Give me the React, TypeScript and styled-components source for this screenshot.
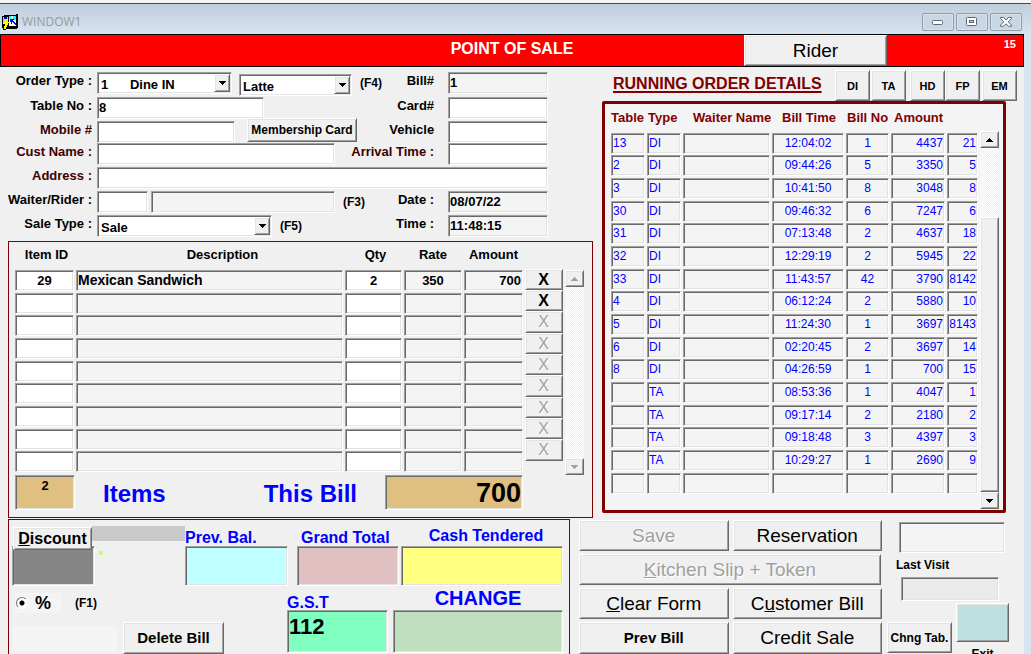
import React from 'react';
import styled, { createGlobalStyle, css } from 'styled-components';

const GlobalStyle = createGlobalStyle`
  *, *::before, *::after { box-sizing: border-box; }
  html, body, #root { height: 100%; margin: 0; }
  body {
    overflow: hidden;
    background: #f0f0f0;
    color: #000;
    font: bold 13px/16px "Liberation Sans", Arial, sans-serif;
  }
  button, input, select { font: inherit; color: inherit; border-radius: 0; margin: 0; }
`;

const sunken = css`
  border: 1px solid;
  border-color: #a0a0a0 #fff #fff #a0a0a0;
  box-shadow: inset 1px 1px #696969, inset -1px -1px #e3e3e3;
`;

const raised = css`
  border: 1px solid;
  border-color: #fff #696969 #696969 #fff;
  box-shadow: inset 1px 1px #e3e3e3, inset -1px -1px #a0a0a0;
`;

/* ---------- window frame ---------- */

const Window = styled.div`
  height: 100vh;
  overflow: hidden;
  display: flex;
  flex-direction: column;
  background: #d7e4f2;
`;

const TitleBar = styled.header`
  flex: none;
  height: 34px;
  display: flex;
  align-items: center;
  gap: 4px;
  padding: 2px 9px 0 2px;
  border-top: 3px solid #f4f4f4;
  box-shadow: inset 0 1px #4a4a4a;
  background: linear-gradient(#bfccda, #d7e4f2);
`;

const WindowTitle = styled.span`
  flex: 1;
  padding-top: 5px;
  color: #999;
  font: 12px/16px "Open Sans", sans-serif;
`;

const AppIcon = styled.svg`
  flex: none;
  margin-top: 5px;
`;

const CaptionButtons = styled.div`
  display: flex;
  gap: 2px;
  padding-top: 5px;
`;

const CaptionButton = styled.button`
  width: 32px;
  height: 18px;
  padding: 0;
  display: grid;
  place-items: center;
  border: 1px solid #919dad;
  border-radius: 2px;
  background: #c9d6e4;
  box-shadow: inset 0 0 0 1px #d7e2ed;
`;

const Client = styled.main`
  flex: 1;
  min-height: 0;
  margin-right: 7px;
  display: flex;
  flex-direction: column;
  background: #f0f0f0;
`;

const Banner = styled.div`
  flex: none;
  height: 33px;
  display: grid;
  grid-template-columns: minmax(0, 1fr) 143px 136px;
  border: 1px solid #000;
  background: #f00;
  color: #fff;
`;

const BannerTitle = styled.h1`
  grid-area: 1 / 1 / 2 / -1;
  margin: 0;
  padding-top: 5px;
  font-size: 16px;
  line-height: 18px;
  text-align: center;
`;

const BannerCount = styled.span`
  grid-area: 1 / 3;
  padding: 1px 7px 0 0;
  font-size: 11px;
  text-align: right;
`;

/* ---------- shared controls ---------- */

const Button = styled.button<{ $size?: number; $bold?: boolean }>`
  ${raised}
  padding: 0;
  background: #f0f0f0;
  color: #000;
  font-size: ${(p) => p.$size ?? 12}px;
  font-weight: ${(p) => (p.$bold ? 'bold' : 'normal')};
  line-height: 20px;
  white-space: nowrap;
  &:disabled {
    color: #a0a0a0;
    text-shadow: 1px 1px #fff;
  }
`;

const RiderButton = styled(Button)`
  grid-area: 1 / 2;
`;

const Field = styled.input<{ $w?: number }>`
  ${sunken}
  ${(p) => (p.$w ? `flex: 0 1 ${p.$w}px; width: ${p.$w}px;` : 'width: 100%;')}
  min-width: 0;
  height: 22px;
  padding: 0 1px 2px;
  background: #fff;
  outline: none;
  &:read-only { background: #f4f4f4; }
`;

const SelectBox = styled.span<{ $w: number; $drop?: boolean }>`
  ${sunken}
  position: relative;
  flex: 0 1 ${(p) => p.$w}px;
  height: 22px;
  margin-top: ${(p) => (p.$drop ? 2 : 0)}px;
  background: #fff;
  select {
    width: 100%;
    height: 20px;
    padding: 3px 18px 0 3px;
    border: 0;
    outline: none;
    background: none;
    appearance: none;
  }
`;

const SelectArrow = styled.span`
  ${raised}
  position: absolute;
  top: 1px;
  right: 1px;
  width: 16px;
  height: 18px;
  display: grid;
  place-items: center;
  background: #f0f0f0;
  pointer-events: none;
`;

const Arrow = ({ up, color = '#000' }: { up?: boolean; color?: string }) => (
  <svg width="7" height="4" viewBox="0 0 7 4" shapeRendering="crispEdges" aria-hidden="true">
    <path d={up ? 'M3 0h1v1h1v1h1v1h1v1H0V3h1V2h1V1h1z' : 'M0 0h7v1H6v1H5v1H4v1H3V3H2V2H1V1H0z'} fill={color} />
  </svg>
);

const Select = ({ id, label, w, value, drop }: { id: string; label?: string; w: number; value: string; drop?: boolean }) => (
  <SelectBox $w={w} $drop={drop}>
    <select id={id} aria-label={label} defaultValue={value}>
      <option value={value}>{value}</option>
    </select>
    <SelectArrow><Arrow /></SelectArrow>
  </SelectBox>
);

const ScrollBar = styled.div<{ $top: number; $end: number }>`
  flex: none;
  width: 19px;
  margin: ${(p) => p.$top}px 0 ${(p) => p.$end}px;
  display: flex;
  flex-direction: column;
  background: repeating-conic-gradient(#fff 0 25%, #f0f0f0 0 50%) 0 0 / 2px 2px;
`;

const ScrollButton = styled(Button)`
  flex: none;
  height: 17px;
  display: grid;
  place-items: center;
`;

const ScrollSpace = styled.div`
  flex: 1;
`;

const ScrollThumb = styled.div`
  ${raised}
  flex: none;
  height: 275px;
  background: #f0f0f0;
`;

/* ---------- page areas ---------- */

const Upper = styled.div`
  flex: none;
  display: grid;
  grid-template-columns: minmax(0, 585fr) minmax(0, 422fr);
  column-gap: 9px;
  padding-left: 8px;
`;

const Lower = styled.div`
  flex: 1;
  min-height: 136px;
  display: grid;
  grid-template-columns: minmax(0, 562fr) minmax(0, 445fr);
  column-gap: 9px;
  padding: 1px 0 0 8px;
`;

/* ---------- order form ---------- */

const Form = styled.form`
  margin-left: -8px;
  padding: 5px 45px 4px 0;
  display: grid;
  grid-template-columns: 92px minmax(0, 350fr) minmax(0, 101fr);
  grid-template-rows: 25px 24px 22px 24px 24px 24px 22px;
  column-gap: 5px;
`;

const Label = styled.label<{ $dark?: boolean }>`
  height: 17px;
  padding-top: 1px;
  color: ${(p) => (p.$dark ? '#400000' : '#000')};
  text-align: right;
  white-space: nowrap;
`;

const Middle = styled.div`
  display: flex;
  align-items: flex-start;
  margin-right: 1px;
  ${Label} { margin-left: auto; padding-right: 8px; }
`;

const Wide = styled.div`
  grid-column: 2 / -1;
`;

const Hint = styled.span`
  padding: 3px 0 0 8px;
  font-size: 12px;
`;

const MemberButton = styled(Button)`
  flex: 0 0 110px;
  height: 24px;
  margin: -3px 0 0 12px;
`;

const Gap = styled.span<{ $w: number }>`
  flex: 0 1 ${(p) => p.$w}px;
`;

/* ---------- bill items ---------- */

const ItemsPanel = styled.section`
  height: 277px;
  border: 1px solid #800000;
  padding-left: 6px;
`;

const ItemsBody = styled.div`
  display: flex;
  height: 233px;
`;

const DataTable = styled.table`
  flex: 1;
  width: 0;
  table-layout: fixed;
  border-collapse: collapse;
  align-self: flex-start;
  th, td { padding: 0 2px 0 0; vertical-align: top; white-space: nowrap; }
`;

const ItemsTable = styled(DataTable)`
  thead tr { height: 28px; }
  tbody tr { height: 23px; }
  tbody tr:nth-child(3n + 2) { height: 22px; }
  th { padding-top: 5px; text-align: center; }
  th:nth-child(odd) { padding-left: 4px; }
  th:nth-child(2) { padding-left: 26px; }
  th:last-child { padding-left: 0; }
`;

const Cell = styled.div<{ $align?: string; $size?: number }>`
  ${sunken}
  height: 21px;
  padding: 0 1px;
  overflow: hidden;
  background: #f4f4f4;
  font-size: ${(p) => (p.$size ? `${p.$size}px` : 'inherit')};
  line-height: 19px;
  text-align: ${(p) => p.$align ?? 'left'};
`;

const CellInput = styled.input`
  ${sunken}
  display: block;
  width: 100%;
  height: 21px;
  padding: 0 2px;
  background: #fff;
  text-align: center;
  outline: none;
`;

const RemoveColumn = styled.div`
  flex: 0 0 38px;
  padding-top: 27px;
  display: grid;
  grid-template-rows: 21px 21px 22px 21px 21px 22px 21px 21px 22px;
  margin-right: 2px;
  button { line-height: 16px; padding-right: 1px; }
`;

const Totals = styled.div`
  display: flex;
  color: #00f;
  font-size: 24px;
  line-height: 38px;
`;

const TotalBox = styled.output<{ $w: number; $big?: boolean }>`
  ${sunken}
  flex: 0 0 ${(p) => p.$w}px;
  height: 35px;
  padding: 1px;
  background: #dfc080;
  color: #000;
  font-size: ${(p) => (p.$big ? 27 : 13)}px;
  line-height: ${(p) => (p.$big ? 32 : 18)}px;
  text-align: ${(p) => (p.$big ? 'right' : 'center')};
`;

const ItemsCaption = styled.span`
  flex: 1;
  padding-left: 28px;
`;

const BillCaption = styled.span`
  padding-right: 28px;
`;

/* ---------- running orders ---------- */

const Running = styled.section`
  display: flex;
  flex-direction: column;
`;

const RunningHead = styled.div`
  height: 34px;
  display: flex;
  align-items: flex-end;
  padding-left: 11px;
  padding-right: 7px;
  color: #800000;
  h2 {
    flex: 1;
    margin: 0 0 8px;
    font-size: 16px;
    line-height: 18px;
    text-decoration: underline;
    text-decoration-thickness: 2px;
    text-underline-offset: 2px;
    text-decoration-skip-ink: none;
    white-space: nowrap;
  }
`;

const FilterButton = styled(Button)<{ $gap?: number }>`
  flex: 0 0 35px;
  height: 31px;
  margin-left: ${(p) => p.$gap ?? 0}px;
`;

const RunningPanel = styled.div`
  display: flex;
  height: 412px;
  margin-right: 18px;
  padding-left: 6px;
  border: 3px solid #800000;
  border-radius: 2px;
  background: #f4f4f4;
`;

const RunningTable = styled(DataTable)`
  color: #00f;
  font-weight: normal;
  font-size: 12px;
  thead tr { height: 29px; }
  tbody tr { height: 23px; }
  tbody tr:nth-child(3n + 1) { height: 22px; }
  th {
    padding-top: 6px;
    color: #800000;
    font-size: 13px;
    text-align: left;
  }
  th:nth-child(3) { padding-left: 10px; }
  th:nth-child(4) { padding-left: 10px; }
  th:nth-child(5), th:nth-child(2) { padding-left: 1px; }
  th:nth-child(6) { padding-left: 3px; }
  ${Cell} { line-height: 18px; }
`;

/* ---------- payment ---------- */

const Payment = styled.section`
  border: 1px solid #800000;
  border-bottom: 0;
  padding: 0 6px 0 3px;
`;

const PayRow = styled.div`
  display: flex;
`;

const PayField = styled.div<{ $w: number; $gap?: number; $grow?: boolean }>`
  flex: ${(p) => (p.$grow ? 1 : 0)} 1 ${(p) => p.$w}px;
  min-width: 0;
  margin-right: ${(p) => p.$gap ?? 0}px;
`;

const PayLabel = styled.label<{ $size?: number; $center?: boolean; $lift?: boolean; $short?: boolean; $inset?: number }>`
  display: block;
  height: ${(p) => (p.$short ? 24 : 26)}px;
  padding-top: ${(p) => (p.$lift ? (p.$short ? 5 : 7) : 9)}px;
  padding-left: ${(p) => p.$inset ?? 0}px;
  color: #00f;
  font-size: ${(p) => p.$size ?? 16}px;
  line-height: ${(p) => (p.$short ? 15 : 18)}px;
  text-align: ${(p) => (p.$center ? 'center' : 'left')};
  white-space: nowrap;
`;

const PayInput = styled.input<{ $color: string; $tall?: boolean }>`
  ${sunken}
  display: block;
  width: 100%;
  height: ${(p) => (p.$tall ? 43 : 40)}px;
  padding: 0 1px 10px;
  background: ${(p) => p.$color};
  font-size: 22px;
  outline: none;
`;

const DiscountHead = styled.div`
  height: 26px;
  display: flex;
  align-items: flex-start;
  padding: 6px 0 0 1px;
`;

const DiscountButton = styled(Button)`
  position: relative;
  z-index: 1;
  flex: 0 0 79px;
  height: 23px;
  margin-top: 1px;
  line-height: 18px;
`;

const GreyStrip = styled.div`
  flex: 1;
  height: 15px;
  background: #c9c9c9;
`;

const DiscountBody = styled.div`
  display: flex;
  gap: 4px;
  ${PayInput} { width: 83px; }
`;

const GreenDot = styled.span`
  width: 4px;
  height: 4px;
  margin-top: 5px;
  background: #c0ff80;
`;

const PercentRow = styled.div`
  display: flex;
  align-items: center;
  height: 27px;
  gap: 6px;
  padding: 7px 0 0 3px;
  ${Hint} { padding-top: 0; }
`;

const PercentLabel = styled.label`
  width: 46px;
  height: 20px;
  display: flex;
  align-items: center;
  gap: 7px;
  padding-left: 1px;
  background: #f4f4f4;
  font-size: 18px;
  input {
    appearance: none;
    flex: none;
    width: 12px;
    height: 12px;
    border: 1px solid;
    border-color: #707070 #fff #fff #707070;
    border-radius: 50%;
    background: radial-gradient(circle, #000 0 2px, #fff 3px);
  }
`;

const DeleteRow = styled.div`
  display: flex;
  align-items: center;
  gap: 6px;
  margin-top: 9px;
`;

const DeleteNote = styled.div`
  width: 105px;
  height: 25px;
  background: #f4f4f4;
`;

const DeleteButton = styled(Button)`
  width: 101px;
  height: 32px;
`;

/* ---------- actions ---------- */

const Actions = styled.section`
  display: flex;
  padding-top: 1px;
`;

const ActionGrid = styled.div`
  flex: 1 1 304px;
  display: grid;
  grid-template-columns: 1fr 1fr;
  grid-template-rows: 31px 31px 31px 32px;
  align-content: start;
  gap: 3px 4px;
`;

const KitchenButton = styled(Button)`
  grid-column: 1 / -1;
  margin-right: 1px;
`;

const Side = styled.div`
  flex: 0 0 138px;
  padding: 2px 15px 0 5px;
  font-size: 12px;
`;

const VisitBlock = styled.div`
  display: flex;
  flex-direction: column;
  padding-left: 9px;
`;

const VisitField = styled(Field)<{ $late?: boolean }>`
  width: ${(p) => (p.$late ? 98 : 106)}px;
  height: ${(p) => (p.$late ? 24 : 31)}px;
  margin: 0 0 0 ${(p) => (p.$late ? 5 : 3)}px;
  &:read-only { background: ${(p) => (p.$late ? '#eaeaea' : '#f4f4f4')}; }
`;

const VisitLabel = styled.label`
  padding: 4px 0;
`;

const SideRow = styled.div`
  display: flex;
  align-items: flex-start;
  gap: 4px;
  padding-top: 2px;
`;

const TableButton = styled(Button)`
  flex: 0 0 65px;
  height: 31px;
  margin-top: 19px;
`;

const ExitBlock = styled.div`
  display: flex;
  flex-direction: column;
  align-items: center;
  gap: 4px;
`;

const ExitButton = styled(Button)`
  width: 53px;
  height: 39px;
  background: #c0e0e0;
`;

/* ---------- data ---------- */

const orders: string[][] = [
  ['13', 'DI', '12:04:02', '1', '4437', '21'],
  ['2', 'DI', '09:44:26', '5', '3350', '5'],
  ['3', 'DI', '10:41:50', '8', '3048', '8'],
  ['30', 'DI', '09:46:32', '6', '7247', '6'],
  ['31', 'DI', '07:13:48', '2', '4637', '18'],
  ['32', 'DI', '12:29:19', '2', '5945', '22'],
  ['33', 'DI', '11:43:57', '42', '3790', '8142'],
  ['4', 'DI', '06:12:24', '2', '5880', '10'],
  ['5', 'DI', '11:24:30', '1', '3697', '8143'],
  ['6', 'DI', '02:20:45', '2', '3697', '14'],
  ['8', 'DI', '04:26:59', '1', '700', '15'],
  ['', 'TA', '08:53:36', '1', '4047', '1'],
  ['', 'TA', '09:17:14', '2', '2180', '2'],
  ['', 'TA', '09:18:48', '3', '4397', '3'],
  ['', 'TA', '10:29:27', '1', '2690', '9'],
  ['', '', '', '', '', ''],
];

const items: string[][] = [
  ['29', 'Mexican Sandwich', '2', '350', '700'],
  ...Array.from({ length: 8 }, () => ['', '', '', '', '']),
];

const nb = '\u00a0';

export default function App() {
  return (
    <>
      <GlobalStyle />
      <Window>
        <TitleBar>
          <AppIcon width="16" height="16" viewBox="0 0 16 16" shapeRendering="crispEdges" aria-hidden="true">
            <path d="M2 1h12V0h2v14h-1v1H4v1H1v-2H0V2h2z" fill="#000" />
            <path d="M1 3h5v7H1z" fill="#c8c8c8" />
            <path d="M2 3h3v2H2z" fill="#00f" />
            <path d="M7 2h7v10H7z" fill="#fff" />
            <path d="M7 2h2v3H7zM11 2h3v4h-3z" fill="#0ff" />
            <path d="M8 5h4v1h-1v1h1v1h1v1h1v2h-1v-1h-1V9h-1V8h-1v2H9V8H8z" fill="#00f" />
            <path d="M4 5h2v2H5v1h2v1H6v2H5v2H4v2H2v-3h1v-2H1V8h2V6h1z" fill="#ff0" />
            <path d="M6 6h1v2H6zM2 10h1v1H2zM5 13h2v1H5z" fill="#000" />
          </AppIcon>
          <WindowTitle>WINDOW1</WindowTitle>
          <CaptionButtons>
            <CaptionButton aria-label="Minimize">
              <svg width="12" height="6" viewBox="0 0 12 6" aria-hidden="true">
                <rect x=".5" y="1.5" width="10" height="4" rx="1" fill="#fff" stroke="#5d6673" />
              </svg>
            </CaptionButton>
            <CaptionButton aria-label="Maximize">
              <svg width="12" height="10" viewBox="0 0 12 10" aria-hidden="true">
                <rect x=".5" y=".5" width="10" height="8" rx="1" fill="#fff" stroke="#5d6673" />
                <rect x="3.5" y="3.5" width="4" height="2" fill="#c9d6e4" stroke="#5d6673" />
              </svg>
            </CaptionButton>
            <CaptionButton aria-label="Close">
              <svg width="12" height="10" viewBox="0 0 12 10" aria-hidden="true">
                <path d="M.5.5h3L6 3 8.500.500h3v1L8.200 4.800l3.300 3.400v1h-3L6 6.800 3.500 9.200h-3v-1l3.300-3.400L.5 1.500z" fill="#fff" stroke="#5d6673" />
              </svg>
            </CaptionButton>
          </CaptionButtons>
        </TitleBar>

        <Client>
          <Banner>
            <BannerTitle>POINT OF SALE</BannerTitle>
            <RiderButton $size={19}>Rider</RiderButton>
            <BannerCount>15</BannerCount>
          </Banner>

          <Upper>
            <div>
              <Form onSubmit={(e) => e.preventDefault()}>
                <Label htmlFor="orderType">Order Type :</Label>
                <Middle>
                  <Select id="orderType" w={135} value={`1${nb.repeat(6)}Dine IN`} />
                  <Gap $w={7} />
                  <Select id="outlet" label="Outlet" w={113} value="Latte" drop />
                  <Hint>(F4)</Hint>
                  <Label htmlFor="bill">Bill#</Label>
                </Middle>
                <Field id="bill" defaultValue="1" readOnly />

                <Label htmlFor="tableNo">Table No :</Label>
                <Middle>
                  <Field id="tableNo" $w={167} defaultValue="8" />
                  <Label htmlFor="card">Card#</Label>
                </Middle>
                <Field id="card" />

                <Label htmlFor="mobile" $dark>Mobile #</Label>
                <Middle>
                  <Field id="mobile" $w={138} />
                  <MemberButton type="button" $bold>Membership Card</MemberButton>
                  <Label htmlFor="vehicle">Vehicle</Label>
                </Middle>
                <Field id="vehicle" />

                <Label htmlFor="cust" $dark>Cust Name :</Label>
                <Middle>
                  <Field id="cust" $w={238} />
                  <Label htmlFor="arrival" $dark>Arrival Time :</Label>
                </Middle>
                <Field id="arrival" />

                <Label htmlFor="address" $dark>Address :</Label>
                <Wide><Field id="address" /></Wide>

                <Label htmlFor="waiter">Waiter/Rider :</Label>
                <Middle>
                  <Field id="waiter" $w={51} />
                  <Gap $w={3} />
                  <Field aria-label="Waiter name" $w={184} readOnly />
                  <Hint>(F3)</Hint>
                  <Label htmlFor="date">Date :</Label>
                </Middle>
                <Field id="date" defaultValue="08/07/22" readOnly />

                <Label htmlFor="saleType">Sale Type :</Label>
                <Middle>
                  <Select id="saleType" w={175} value="Sale" />
                  <Hint>(F5)</Hint>
                  <Label htmlFor="time">Time :</Label>
                </Middle>
                <Field id="time" defaultValue="11:48:15" readOnly />
              </Form>

              <ItemsPanel>
                <ItemsBody>
                  <ItemsTable>
                    <colgroup>
                      <col width="61" /><col /><col width="59" /><col width="60" /><col width="61" />
                    </colgroup>
                    <thead>
                      <tr><th>Item ID</th><th>Description</th><th>Qty</th><th>Rate</th><th>Amount</th></tr>
                    </thead>
                    <tbody>
                      {items.map((r, i) => (
                        <tr key={i}>
                          <td><CellInput aria-label="Item ID" defaultValue={r[0]} /></td>
                          <td><Cell $size={14}>{r[1]}</Cell></td>
                          <td><CellInput aria-label="Qty" defaultValue={r[2]} /></td>
                          <td><Cell $align="center">{r[3]}</Cell></td>
                          <td><Cell $align="right">{r[4]}</Cell></td>
                        </tr>
                      ))}
                    </tbody>
                  </ItemsTable>
                  <RemoveColumn>
                    {items.map((_, i) => (
                      <Button key={i} $size={16} $bold={i < 2} disabled={i > 1} aria-label={`Remove line ${i + 1}`}>X</Button>
                    ))}
                  </RemoveColumn>
                  <ScrollBar $top={28} $end={0}>
                    <ScrollButton aria-label="Scroll items up"><Arrow up color="#a0a0a0" /></ScrollButton>
                    <ScrollSpace />
                    <ScrollButton aria-label="Scroll items down"><Arrow color="#a0a0a0" /></ScrollButton>
                  </ScrollBar>
                  <Gap $w={8} />
                </ItemsBody>
                <Totals>
                  <TotalBox $w={60}>2</TotalBox>
                  <ItemsCaption>Items</ItemsCaption>
                  <BillCaption>This Bill</BillCaption>
                  <TotalBox $w={138} $big>700</TotalBox>
                  <Gap $w={69} />
                </Totals>
              </ItemsPanel>
            </div>

            <Running>
              <RunningHead>
                <h2>RUNNING ORDER DETAILS</h2>
                <FilterButton $bold $size={11}>DI</FilterButton>
                <FilterButton $bold $size={11} $gap={1}>TA</FilterButton>
                <FilterButton $bold $size={11} $gap={4}>HD</FilterButton>
                <FilterButton $bold $size={11}>FP</FilterButton>
                <FilterButton $bold $size={11} $gap={2}>EM</FilterButton>
              </RunningHead>
              <RunningPanel>
                <RunningTable>
                  <colgroup>
                    <col width="36" /><col width="36" /><col /><col width="74" /><col width="45" /><col width="56" /><col width="33" />
                  </colgroup>
                  <thead>
                    <tr>
                      <th>Table</th><th>Type</th><th>Waiter Name</th><th>Bill Time</th><th>Bill No</th><th>Amount</th><th aria-label="Order" />
                    </tr>
                  </thead>
                  <tbody>
                    {orders.map((r, i) => (
                      <tr key={i}>
                        <td><Cell>{r[0]}</Cell></td>
                        <td><Cell>{r[1]}</Cell></td>
                        <td><Cell /></td>
                        <td><Cell $align="center">{r[2]}</Cell></td>
                        <td><Cell $align="center">{r[3]}</Cell></td>
                        <td><Cell $align="right">{r[4]}</Cell></td>
                        <td><Cell $align="right">{r[5]}</Cell></td>
                      </tr>
                    ))}
                  </tbody>
                </RunningTable>
                <ScrollBar $top={27} $end={1}>
                  <ScrollButton aria-label="Scroll orders up"><Arrow up /></ScrollButton>
                  <ScrollSpace />
                  <ScrollThumb />
                  <ScrollButton aria-label="Scroll orders down"><Arrow /></ScrollButton>
                </ScrollBar>
                <Gap $w={4} />
              </RunningPanel>
            </Running>
          </Upper>

          <Lower>
            <Payment>
              <PayRow>
                <PayField $w={173}>
                  <DiscountHead>
                    <DiscountButton $bold $size={16}><u>D</u>iscount</DiscountButton>
                    <GreyStrip />
                  </DiscountHead>
                  <DiscountBody>
                    <PayInput aria-label="Discount" $color="#868686" />
                    <GreenDot />
                  </DiscountBody>
                </PayField>
                <PayField $w={103} $gap={9}>
                  <PayLabel htmlFor="prevBal">Prev. Bal.</PayLabel>
                  <PayInput id="prevBal" $color="#c0ffff" />
                </PayField>
                <PayField $w={102} $gap={2}>
                  <PayLabel htmlFor="grand" $inset={4}>Grand Total</PayLabel>
                  <PayInput id="grand" $color="#e0c0c0" />
                </PayField>
                <PayField $w={160} $grow>
                  <PayLabel htmlFor="cash" $lift $center $inset={8}>Cash Tendered</PayLabel>
                  <PayInput id="cash" $color="#ffff80" />
                </PayField>
              </PayRow>
              <PayRow>
                <PayField $w={275}>
                  <PercentRow>
                    <PercentLabel><input type="radio" name="discountMode" defaultChecked />%</PercentLabel>
                    <Hint>(F1)</Hint>
                  </PercentRow>
                  <DeleteRow>
                    <DeleteNote />
                    <DeleteButton $bold $size={15}>Delete Bill</DeleteButton>
                  </DeleteRow>
                </PayField>
                <PayField $w={101} $gap={5}>
                  <PayLabel htmlFor="gst" $short>G.S.T</PayLabel>
                  <PayInput id="gst" $color="#80ffc0" $tall defaultValue="112" />
                </PayField>
                <PayField $w={170} $grow>
                  <PayLabel htmlFor="change" $size={20} $center $lift $short>CHANGE</PayLabel>
                  <PayInput id="change" $color="#c0e0c0" $tall />
                </PayField>
              </PayRow>
            </Payment>

            <Actions>
              <ActionGrid>
                <Button $size={19} disabled>Save</Button>
                <Button $size={19}>Reservation</Button>
                <KitchenButton $size={19} disabled><u>K</u>itchen Slip + Token</KitchenButton>
                <Button $size={19}><u>C</u>lear Form</Button>
                <Button $size={19}>C<u>u</u>stomer Bill</Button>
                <Button $size={15} $bold>Prev Bill</Button>
                <Button $size={19}>Credit Sale</Button>
              </ActionGrid>
              <Side>
                <VisitBlock>
                  <VisitField aria-label="Visits" readOnly />
                  <VisitLabel htmlFor="lastVisit">Last Visit</VisitLabel>
                  <VisitField id="lastVisit" $late readOnly />
                </VisitBlock>
                <SideRow>
                  <TableButton $bold>Chng Tab.</TableButton>
                  <ExitBlock>
                    <ExitButton id="exit" aria-label="Exit" />
                    <label htmlFor="exit">Exit</label>
                  </ExitBlock>
                </SideRow>
              </Side>
            </Actions>
          </Lower>
        </Client>
      </Window>
    </>
  );
}
